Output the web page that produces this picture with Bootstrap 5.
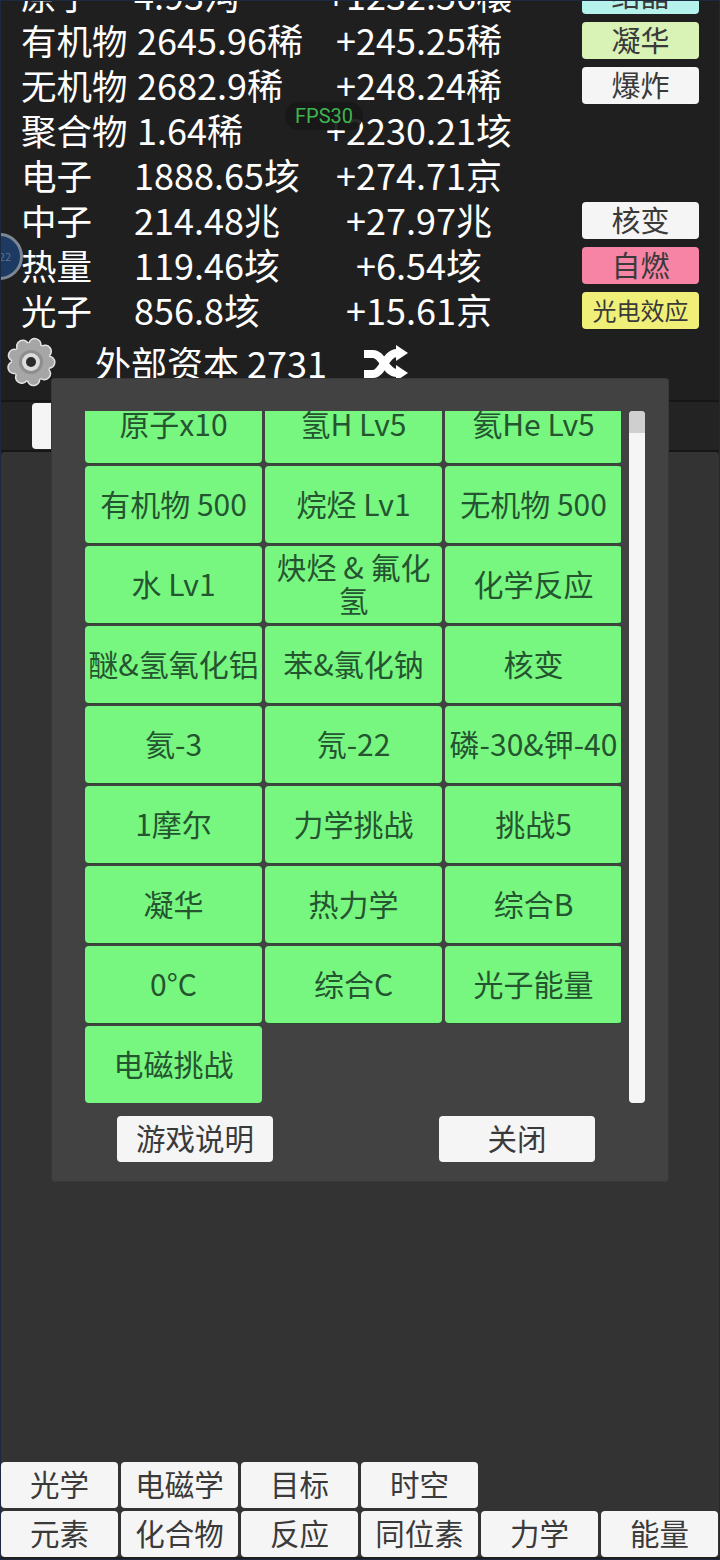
<!DOCTYPE html>
<html lang="zh-CN">
<head>
    <meta charset="UTF-8">
    <meta name="viewport" content="width=device-width, initial-scale=1.0">
    <title>化学</title>
    <link href="https://cdn.jsdelivr.net/npm/bootstrap@5.3.0/dist/css/bootstrap.min.css" rel="stylesheet">
    <style>
        html, body {
            height: 100%;
        }

        body {
            background-color: #1f1f1f;
            font-family: "Noto Sans CJK SC", "Noto Sans", sans-serif;
            overflow: hidden;
        }

        .game-shell {
            width: 720px;
            height: 1560px;
            border: 1px solid #1b2a40;
            overflow: hidden;
            position: relative;
        }

        /* resource list, scrolled so the first row is cut by the top edge */
        .res-list {
            height: 399px;
            padding: 0 20px 0 20px;
        }

        .res-rows {
            margin-top: -28px;
        }

        .res-row {
            height: 45px;
            color: #fff;
            font-size: 36px;
            line-height: 45px;
            white-space: nowrap;
        }

        .res-name {
            width: 113px;
            font-size: 35.5px;
            margin-bottom: 3px;
        }

        .res-long {
            width: 116px;
        }

        .res-value {
            width: 170px;
            margin-bottom: 3px;
        }

        .res-value-short {
            width: 167px;
        }

        .res-delta {
            width: 230px;
            text-align: center;
            margin-bottom: 3px;
        }

        .act-btn {
            width: 117px;
            height: 37px;
            margin-left: auto;
            background-color: #f5f5f5;
            border: 0;
            border-radius: 4px;
            color: #3a3a3a;
            font-size: 29px;
            line-height: 33px;
            padding: 0 0 3px;
        }

        .act-small {
            font-size: 24px;
        }

        .capital-row {
            height: 58px;
            margin-left: -15px;
            color: #fff;
            font-size: 36px;
        }

        .capital-text {
            margin-left: 39px;
            margin-right: 37px;
            white-space: nowrap;
        }

        .gear-icon {
            width: 50px;
            height: 50px;
        }

        .shuffle-icon {
            width: 44px;
            height: 36px;
            margin-bottom: -1px;
        }

        /* strip under the list, mostly hidden by the dialog */
        .sub-tabs {
            height: 52px;
            background-color: #232323;
            border-top: 2px solid #161616;
            border-bottom: 2px solid #161616;
            padding: 1px 0 0 31px;
        }

        .sub-tab {
            width: 120px;
            height: 46px;
            background-color: #f5f5f5;
            border-radius: 4px;
        }

        .main-area {
            height: 1008px;
            background-color: #333;
            border-radius: 4px 4px 0 0;
        }

        .tab-rows {
            background-color: #333;
            padding: 2px 0 0 0;
            gap: 3px;
        }

        .tab-line {
            gap: 3px;
        }

        .tab-btn {
            width: 117px;
            height: 46px;
            background-color: #f5f5f5;
            border: 0;
            border-radius: 4px;
            color: #3a3a3a;
            font-size: 29.5px;
            line-height: 40px;
            padding: 0 0 4px;
        }

        /* dialog */
        .ach-dialog {
            position: absolute;
            left: 50px;
            top: 377px;
            width: 618px;
            height: 804px;
            background-color: #424242;
            border: 1px solid #383838;
            border-radius: 3px;
            padding: 32px 23px 0 33px;
        }

        .ach-scroll {
            height: 692px;
            gap: 8px;
        }

        .ach-viewport {
            width: 537px;
            overflow: hidden;
        }

        .ach-grid {
            display: grid;
            grid-template-columns: repeat(3, 177px);
            grid-auto-rows: 77px;
            gap: 3px;
            margin-top: -25px;
        }

        .ach-item {
            background-color: #78f780;
            border: 0;
            border-radius: 4px;
            box-shadow: 0 1px 0 #2f4a33;
            color: #245530;
            font-size: 30px;
            line-height: 33px;
            padding: 0 0 3px;
            white-space: normal;
        }

        .scroll-track {
            width: 16px;
            background-color: #f5f5f5;
            border-radius: 4px;
            overflow: hidden;
        }

        .scroll-thumb {
            height: 22px;
            background-color: #cfcfcf;
        }

        .dlg-actions {
            padding: 13px 0 0 32px;
            gap: 166px;
        }

        .dlg-btn {
            width: 156px;
            height: 46px;
            background-color: #f5f5f5;
            border: 0;
            border-radius: 4px;
            color: #3a3a3a;
            font-size: 29.5px;
            line-height: 40px;
            padding: 0 0 4px;
        }

        /* floating overlays */
        .fps-pill {
            position: absolute;
            left: 284px;
            top: 101px;
            width: 78px;
            height: 28px;
            background-color: rgba(24, 24, 24, .92);
            border-radius: 14px;
            color: #3fb54e;
            font-family: Roboto, sans-serif;
            font-size: 20px;
            line-height: 28px;
            text-align: center;
        }

        .float-ball {
            position: absolute;
            left: -25px;
            top: 232px;
            width: 47px;
            height: 47px;
            background-color: #1d3a63;
            border: 3px solid #7d8793;
            border-radius: 50%;
            color: #5f7390;
            font-size: 11px;
            line-height: 41px;
            text-align: right;
            padding-right: 9px;
        }
    </style>
</head>
<body>
<div class="game-shell">
    <!-- Resources -->
    <div class="res-list overflow-hidden">
        <div class="res-rows" id="resRows"></div>
        <div class="capital-row d-flex align-items-center">
            <svg class="gear-icon flex-shrink-0" viewBox="0 0 50 50">
                <circle cx="25" cy="25" r="18" fill="none" stroke="#e2e2e2" stroke-width="13" stroke-linecap="round" stroke-dasharray="0.5 12.07"/>
                <circle cx="25" cy="25" r="20" fill="#e2e2e2"/>
                <circle cx="25" cy="25" r="18" fill="none" stroke="#a6a6a6" stroke-width="10" stroke-linecap="round" stroke-dasharray="0.5 12.07"/>
                <circle cx="25" cy="25" r="19" fill="#a6a6a6"/>
                <circle cx="25" cy="25" r="12" fill="#8e8e8e"/>
                <circle cx="25" cy="25" r="9" fill="#dcdcdc"/>
                <circle cx="25" cy="25" r="5" fill="#2a2a2a"/>
            </svg>
            <span class="capital-text">外部资本 2731</span>
            <svg class="shuffle-icon flex-shrink-0" viewBox="0 0 44 36">
                <path d="M0 9h9c10 0 12 19 24 19" fill="none" stroke="#fff" stroke-width="8"/>
                <path d="M0 29h9c10 0 12-21 24-21" fill="none" stroke="#fff" stroke-width="8"/>
                <path d="M32 20l12 8-12 8zM32 0l12 8-12 8z" fill="#fff"/>
            </svg>
        </div>
    </div>

    <div class="sub-tabs"><div class="sub-tab"></div></div>
    <div class="main-area"></div>

    <!-- Bottom tabs -->
    <div class="tab-rows d-flex flex-column">
        <div class="tab-line d-flex" id="tabsTop"></div>
        <div class="tab-line d-flex" id="tabsBottom"></div>
    </div>

    <!-- Dialog -->
    <div class="ach-dialog">
        <div class="ach-scroll d-flex">
            <div class="ach-viewport">
                <div class="ach-grid" id="achGrid"></div>
            </div>
            <div class="scroll-track"><div class="scroll-thumb"></div></div>
        </div>
        <div class="dlg-actions d-flex">
            <button class="btn dlg-btn" type="button">游戏说明</button>
            <button class="btn dlg-btn" type="button">关闭</button>
        </div>
    </div>

    <div class="fps-pill">FPS30</div>
    <div class="float-ball">22</div>
</div>

<script>
    const resources = [
        ["原子", "4.93沟", "+1232.56穰", "结晶", "#b5f2ec"],
        ["有机物", "2645.96稀", "+245.25稀", "凝华", "#d9f2b5"],
        ["无机物", "2682.9稀", "+248.24稀", "爆炸", "#f5f5f5"],
        ["聚合物", "1.64稀", "+2230.21垓", "", ""],
        ["电子", "1888.65垓", "+274.71京", "", ""],
        ["中子", "214.48兆", "+27.97兆", "核变", "#f5f5f5"],
        ["热量", "119.46垓", "+6.54垓", "自燃", "#f783a5"],
        ["光子", "856.8垓", "+15.61京", "光电效应", "#f0f078"]
    ];

    const resRows = document.getElementById("resRows");
    resources.forEach(r => {
        const row = document.createElement("div");
        row.className = "res-row d-flex align-items-center";
        const isLong = r[0].length > 2;
        let btn = "";
        if (r[3]) {
            const small = r[3].length > 2 ? " act-small" : "";
            btn = `<button class="btn act-btn${small}" type="button" style="background-color:${r[4]}">${r[3]}</button>`;
        }
        row.innerHTML = `
            <span class="res-name${isLong ? " res-long" : ""}">${r[0]}</span>
            <span class="res-value${isLong ? " res-value-short" : ""}">${r[1]}</span>
            <span class="res-delta">${r[2]}</span>
            ${btn}`;
        resRows.appendChild(row);
    });

    function addTabs(id, names) {
        const box = document.getElementById(id);
        names.forEach(name => {
            const b = document.createElement("button");
            b.className = "btn tab-btn";
            b.type = "button";
            b.textContent = name;
            box.appendChild(b);
        });
    }
    addTabs("tabsTop", ["光学", "电磁学", "目标", "时空"]);
    addTabs("tabsBottom", ["元素", "化合物", "反应", "同位素", "力学", "能量"]);

    const achievements = [
        "原子x10", "氢H Lv5", "氦He Lv5",
        "有机物 500", "烷烃 Lv1", "无机物 500",
        "水 Lv1", "炔烃 & 氟化氢", "化学反应",
        "醚&氢氧化铝", "苯&氯化钠", "核变",
        "氦-3", "氖-22", "磷-30&钾-40",
        "1摩尔", "力学挑战", "挑战5",
        "凝华", "热力学", "综合B",
        "0°C", "综合C", "光子能量",
        "电磁挑战"
    ];
    const achGrid = document.getElementById("achGrid");
    achievements.forEach(name => {
        const b = document.createElement("button");
        b.className = "btn ach-item";
        b.type = "button";
        b.textContent = name;
        achGrid.appendChild(b);
    });
</script>
<script src="https://cdn.jsdelivr.net/npm/bootstrap@5.3.0/dist/js/bootstrap.bundle.min.js"></script>
</body>
</html>
